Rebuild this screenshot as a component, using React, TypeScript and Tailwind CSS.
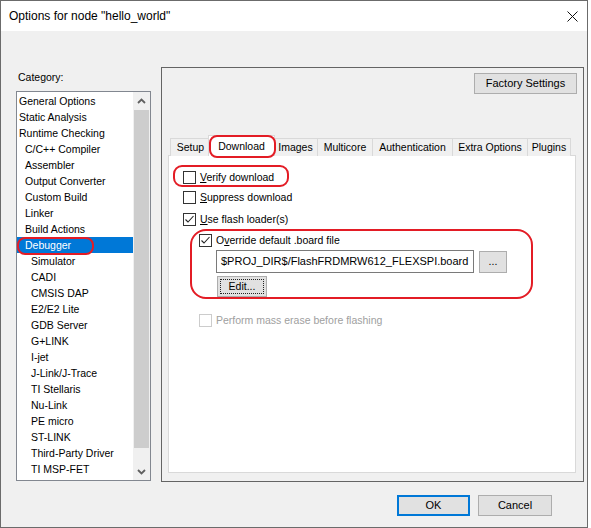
import React from "react";

const items: [string, number][] = [
  ["General Options", 0],
  ["Static Analysis", 0],
  ["Runtime Checking", 0],
  ["C/C++ Compiler", 1],
  ["Assembler", 1],
  ["Output Converter", 1],
  ["Custom Build", 1],
  ["Linker", 1],
  ["Build Actions", 1],
  ["Debugger", 1],
  ["Simulator", 2],
  ["CADI", 2],
  ["CMSIS DAP", 2],
  ["E2/E2 Lite", 2],
  ["GDB Server", 2],
  ["G+LINK", 2],
  ["I-jet", 2],
  ["J-Link/J-Trace", 2],
  ["TI Stellaris", 2],
  ["Nu-Link", 2],
  ["PE micro", 2],
  ["ST-LINK", 2],
  ["Third-Party Driver", 2],
  ["TI MSP-FET", 2],
];

const tabs: [string, number][] = [
  ["Setup", 40],
  ["Download", 63],
  ["Images", 44],
  ["Multicore", 55],
  ["Authentication", 80],
  ["Extra Options", 75],
  ["Plugins", 44],
];

function Check({ checked, disabled }: { checked?: boolean; disabled?: boolean }) {
  return (
    <div
      className={
        "w-[13px] h-[13px] shrink-0 border bg-white flex items-center justify-center " +
        (disabled ? "border-[#cccccc]" : "border-[#333333]")
      }
    >
      {checked && (
        <svg width="11" height="11" viewBox="0 0 11 11">
          <path d="M1.5 5.5 L4 8 L9.5 2" fill="none" stroke="#222" strokeWidth="1.1" />
        </svg>
      )}
    </div>
  );
}

function Chevron({ up }: { up?: boolean }) {
  return (
    <svg width="9" height="6" viewBox="0 0 9 6">
      <path
        d={up ? "M1 5 L4.5 1.5 L8 5" : "M1 1 L4.5 4.5 L8 1"}
        fill="none"
        stroke="#606060"
        strokeWidth="1.8"
      />
    </svg>
  );
}

export default function App() {
  return (
    <div className="relative w-[591px] h-[528px] bg-white font-['Liberation_Sans',Arial,sans-serif] text-[10.5px] text-black">
      <div className="w-[588px] h-[528px] border border-[#6b6b6b] bg-[#f0f0f0] flex flex-col">
        {/* title bar */}
        <div className="h-[30px] bg-white flex items-center justify-between pl-[8px] pr-[9px]">
          <span className="text-[12px] text-black">Options for node "hello_world"</span>
          <svg width="11" height="11" viewBox="0 0 11 11">
            <path d="M0.5 0.5 L10.5 10.5 M10.5 0.5 L0.5 10.5" stroke="#111" strokeWidth="1" />
          </svg>
        </div>

        <div className="flex flex-col flex-1">
          <div className="flex mt-[36px] ml-[15px]">
            {/* left column */}
            <div className="flex flex-col w-[135px]">
              <div className="h-[24px] pt-[3px] leading-[14px] pl-[2px]">Category:</div>
              <div className="h-[390px] border border-[#828790] bg-white flex">
                <div className="w-[116px] flex flex-col pt-[1px]">
                  {items.map(([name, lvl]) => {
                    const sel = name === "Debugger";
                    return (
                      <div
                        key={name}
                        className={
                          "h-[16px] leading-[16px] whitespace-nowrap " +
                          (lvl === 0 ? "pl-[2px] " : lvl === 1 ? "pl-[8px] " : "pl-[14px] ") +
                          (sel ? "bg-[#0078d7] text-white" : "")
                        }
                      >
                        {name}
                      </div>
                    );
                  })}
                </div>
                <div className="w-[17px] flex flex-col bg-[#f0f0f0]">
                  <div className="h-[17px] flex items-center justify-center">
                    <Chevron up />
                  </div>
                  <div className="mt-[1px] h-[338px] mx-[1px] bg-[#cdcdcd]" />
                  <div className="flex-1" />
                  <div className="h-[17px] flex items-center justify-center">
                    <Chevron />
                  </div>
                </div>
              </div>
            </div>

            {/* right panel */}
            <div className="ml-[10px] w-[423px] h-[415px] border border-[#646464] flex flex-col">
              <div className="flex justify-end pr-[6px] pt-[5px]">
                <div className="w-[103px] h-[21px] border border-[#adadad] bg-[#e1e1e1] flex items-center justify-center text-[11px]">
                  Factory Settings
                </div>
              </div>
              <div className="mt-[41px] px-[6px] flex flex-col">
                <div className="flex items-end h-[21px] pl-[2px] -mb-[1px] relative z-10">
                  {tabs.map(([t, w], i) => {
                    const sel = t === "Download";
                    if (sel)
                      return (
                        <div
                          key={t}
                          style={{ width: w + 4 }}
                          className="-mx-[2px] h-[21px] bg-white border-t border-l border-r border-[#d9d9d9] flex items-start justify-center pt-[3px] relative z-10"
                        >
                          {t}
                        </div>
                      );
                    return (
                      <div
                        key={t}
                        style={{ width: w }}
                        className={
                          "h-[18px] bg-[#f0f0f0] border-t border-l border-[#d9d9d9] flex items-center justify-center whitespace-nowrap " +
                          (i === tabs.length - 1 ? "border-r" : "")
                        }
                      >
                        {t}
                      </div>
                    );
                  })}
                </div>
                <div className="w-[408px] h-[318px] bg-white border border-[#d9d9d9] flex flex-col pl-[14px] pt-[15px]">
                  <div className="h-[13px] flex items-center gap-[4px]">
                    <Check />
                    <span>
                      <span className="underline">V</span>erify download
                    </span>
                  </div>
                  <div className="h-[13px] mt-[7px] flex items-center gap-[4px]">
                    <Check />
                    <span>
                      <span className="underline">S</span>uppress download
                    </span>
                  </div>
                  <div className="h-[13px] mt-[9px] flex items-center gap-[4px]">
                    <Check checked />
                    <span>
                      <span className="underline">U</span>se flash loader(s)
                    </span>
                  </div>
                  <div className="h-[13px] mt-[8px] ml-[16px] flex items-center gap-[4px]">
                    <Check checked />
                    <span>
                      O<span className="underline">v</span>erride default .board file
                    </span>
                  </div>
                  <div className="mt-[3px] ml-[33px] flex items-start gap-[5px]">
                    <div className="w-[258px] h-[23px] border border-[#7a7a7a] bg-white flex items-center pl-[4px] text-[11px] whitespace-nowrap overflow-hidden">
                      $PROJ_DIR$/FlashFRDMRW612_FLEXSPI.board
                    </div>
                    <div className="mt-[1px] w-[28px] h-[22px] border border-[#adadad] bg-[#e1e1e1] flex items-center justify-center">
                      ...
                    </div>
                  </div>
                  <div className="mt-[3px] ml-[34px] w-[50px] h-[21px] border border-[#adadad] bg-[#e1e1e1] p-[2px]">
                    <div className="w-full h-full border border-dotted border-[#222] flex items-center justify-center">
                      Edit...
                    </div>
                  </div>
                  <div className="h-[13px] mt-[17px] ml-[16px] flex items-center gap-[4px] text-[#a0a0a0]">
                    <Check disabled />
                    <span>Perform mass erase before flashing</span>
                  </div>
                </div>
              </div>
            </div>
          </div>

          {/* bottom buttons */}
          <div className="flex justify-end gap-[8px] mt-[13px] pr-[35px] text-[11px]">
            <div className="w-[73px] h-[21px] border-2 border-[#0078d7] bg-[#e1e1e1] flex items-center justify-center">
              OK
            </div>
            <div className="w-[74px] h-[21px] border border-[#adadad] bg-[#e1e1e1] flex items-center justify-center">
              Cancel
            </div>
          </div>
        </div>
      </div>

      {/* red annotation outlines */}
      <div className="absolute z-20 left-[17px] top-[237px] w-[77px] h-[18px] border-2 border-[#e31c25] rounded-[8px]" />
      <div className="absolute z-20 left-[209px] top-[135px] w-[67px] h-[23px] border-2 border-[#e31c25] rounded-[8px]" />
      <div className="absolute z-20 left-[173px] top-[165px] w-[116px] h-[22px] border-2 border-[#e31c25] rounded-[9px]" />
      <div className="absolute z-20 left-[190px] top-[229px] w-[343px] h-[70px] border-2 border-[#e31c25] rounded-[16px]" />
    </div>
  );
}
